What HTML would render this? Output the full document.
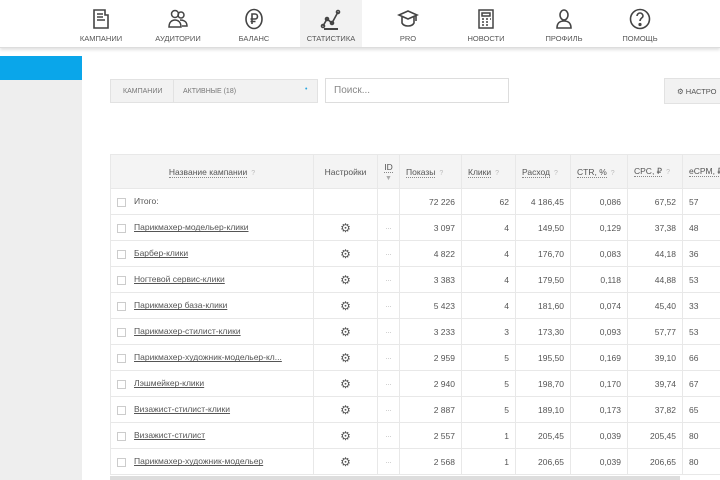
<!DOCTYPE html>
<html><head><meta charset="utf-8"><style>
*{margin:0;padding:0;box-sizing:border-box}
body{width:720px;height:480px;overflow:hidden;background:#fff;font-family:"Liberation Sans",sans-serif;color:#555;position:relative}
.nav{position:absolute;left:0;top:0;width:720px;height:48px;background:#fff;border-bottom:1px solid #ddd;box-shadow:0 2px 3px rgba(0,0,0,.12)}
.it{position:absolute;top:0;height:47px;text-align:center;font-size:7.5px;color:#555}
.it svg{position:absolute;top:8px;left:50%;margin-left:-11px}
.it span{position:absolute;bottom:4px;left:0;right:0}
.side{position:absolute;left:0;top:56px;width:82px;height:424px;background:#eee}
.blue{position:absolute;left:0;top:56px;width:82px;height:24px;background:#0aa6ea}
.fbox{position:absolute;left:110px;top:79px;width:208px;height:24px;background:#f2f2f2;border:1px solid #e2e2e2;font-size:7px;color:#777}
.search{position:absolute;left:325px;top:78px;width:184px;height:25px;border:1px solid #ddd;font-size:10px;color:#888;padding:6px 8px}
.btn{position:absolute;left:664px;top:78px;width:60px;height:26px;background:#f2f2f2;border:1px solid #e2e2e2;font-size:7.5px;color:#555;padding:8px 0 0 12px}
table{position:absolute;left:110px;top:154px;width:630px;border-collapse:collapse;font-size:8.5px;color:#555;table-layout:fixed}
td,th{border:1px solid #e8e8e8;height:26px;padding:0 6px;white-space:nowrap;overflow:hidden}
th{background:#f4f4f4;font-weight:normal;height:34px;color:#555}
th u{text-decoration:none;border-bottom:1px dotted #888}
th i{font-style:normal;color:#bbb;font-size:7px;margin-left:4px}
td.n{text-align:right}
td.nm a{color:#555;text-decoration:underline}
.cb{display:inline-block;width:9px;height:9px;border:1px solid #ccc;vertical-align:middle;margin-right:8px;background:#fff}
.g{text-align:center;font-size:12px;color:#555}
.d{text-align:center;color:#aaa;font-size:7px}
</style></head><body>
<div class="nav">
<div class="it" style="left:70px;width:62px;background:#fff"><svg width="22" height="22" viewBox="0 0 22 22" fill="none" stroke="#444" stroke-width="1.6"><path d="M4 2h11v5h3v13H4z M7 6h6M7 9h6M7 12h8"/></svg><span>КАМПАНИИ</span></div>
<div class="it" style="left:146px;width:64px"><svg width="22" height="22" viewBox="0 0 22 22" fill="none" stroke="#444" stroke-width="1.5"><circle cx="8" cy="6" r="3.5"/><circle cx="14" cy="7" r="3"/><path d="M2 19c0-5 3-7 6-7s6 2 6 7zM13 12c3 0 7 1 7 6h-5"/></svg><span>АУДИТОРИИ</span></div>
<div class="it" style="left:222px;width:64px"><svg width="22" height="22" viewBox="0 0 22 22" fill="none" stroke="#444" stroke-width="1.6"><ellipse cx="11" cy="11" rx="8" ry="9.5"/><path d="M9 16V6h3a2.5 2.5 0 010 5H7.5M7.5 13.5h5"/></svg><span>БАЛАНС</span></div>
<div class="it" style="left:300px;width:62px;background:#f2f2f2"><svg width="22" height="22" viewBox="0 0 22 22" fill="none" stroke="#444" stroke-width="1.6"><path d="M3 18l4-7 5 4 6-11"/><circle cx="3" cy="18" r="1.5"/><circle cx="7" cy="11" r="1.5"/><circle cx="12" cy="15" r="1.5"/><circle cx="18" cy="4" r="1.5"/><path d="M4 21h14" stroke-width="2"/></svg><span>СТАТИСТИКА</span></div>
<div class="it" style="left:376px;width:64px"><svg width="22" height="22" viewBox="0 0 22 22" fill="none" stroke="#444" stroke-width="1.6"><path d="M2 7l9-4 9 4-9 4z M5 9v6c2 4 10 4 12 0V9M19 7v6"/></svg><span>PRO</span></div>
<div class="it" style="left:454px;width:64px"><svg width="22" height="22" viewBox="0 0 22 22" fill="none" stroke="#444" stroke-width="1.5"><rect x="4" y="2" width="14" height="18"/><path d="M7 5h8v3H7zM7 11h2M11 11h2M15 11h1M7 14h2M11 14h2M7 17h2M11 17h2"/></svg><span>НОВОСТИ</span></div>
<div class="it" style="left:532px;width:64px"><svg width="22" height="22" viewBox="0 0 22 22" fill="none" stroke="#444" stroke-width="1.6"><ellipse cx="11" cy="7" rx="4" ry="5"/><path d="M4 20c0-5 3-7 7-7s7 2 7 7z"/></svg><span>ПРОФИЛЬ</span></div>
<div class="it" style="left:608px;width:64px"><svg width="22" height="22" viewBox="0 0 22 22" fill="none" stroke="#444" stroke-width="1.6"><circle cx="11" cy="11" r="9.5"/><path d="M8 8a3 3 0 116 0c0 2-3 2-3 5"/><circle cx="11" cy="16.5" r=".8" fill="#444"/></svg><span>ПОМОЩЬ</span></div>
</div>
<div class="side"></div><div class="blue"></div>
<div class="fbox"><span style="position:absolute;left:12px;top:8px">КАМПАНИИ</span><span style="position:absolute;left:62px;top:0;height:22px;border-left:1px solid #e2e2e2"></span><span style="position:absolute;left:72px;top:8px">АКТИВНЫЕ (18)</span><span style="position:absolute;left:194px;top:6px;color:#29a6e0">•</span></div>
<div class="search">Поиск...</div>
<div class="btn">⚙ НАСТРО</div>
<table>
<colgroup><col style="width:203px"><col style="width:64px"><col style="width:22px"><col style="width:62px"><col style="width:54px"><col style="width:55px"><col style="width:57px"><col style="width:55px"><col style="width:58px"></colgroup>
<tr><th><u>Название кампании</u><i>?</i></th><th>Настройки</th><th style="padding:0;text-align:center"><u>ID</u><br><span style="color:#aaa;font-size:7px">▼</span></th><th style="text-align:left"><u>Показы</u><i>?</i></th><th style="text-align:left"><u>Клики</u><i>?</i></th><th style="text-align:left"><u>Расход</u><i>?</i></th><th style="text-align:left"><u>CTR, %</u><i>?</i></th><th style="text-align:left"><u>CPC, ₽</u><i>?</i></th><th style="text-align:left"><u>eCPM, ₽</u></th></tr>
<tr><td class="nm"><span class="cb"></span>Итого:</td><td></td><td></td><td class="n">72 226</td><td class="n">62</td><td class="n">4 186,45</td><td class="n">0,086</td><td class="n">67,52</td><td style="text-align:left">57</td></tr>
<tr><td class="nm"><span class="cb"></span><a>Парикмахер-модельер-клики</a></td><td class="g">⚙</td><td class="d">...</td><td class="n">3 097</td><td class="n">4</td><td class="n">149,50</td><td class="n">0,129</td><td class="n">37,38</td><td style="text-align:left">48</td></tr>
<tr><td class="nm"><span class="cb"></span><a>Барбер-клики</a></td><td class="g">⚙</td><td class="d">...</td><td class="n">4 822</td><td class="n">4</td><td class="n">176,70</td><td class="n">0,083</td><td class="n">44,18</td><td style="text-align:left">36</td></tr>
<tr><td class="nm"><span class="cb"></span><a>Ногтевой сервис-клики</a></td><td class="g">⚙</td><td class="d">...</td><td class="n">3 383</td><td class="n">4</td><td class="n">179,50</td><td class="n">0,118</td><td class="n">44,88</td><td style="text-align:left">53</td></tr>
<tr><td class="nm"><span class="cb"></span><a>Парикмахер база-клики</a></td><td class="g">⚙</td><td class="d">...</td><td class="n">5 423</td><td class="n">4</td><td class="n">181,60</td><td class="n">0,074</td><td class="n">45,40</td><td style="text-align:left">33</td></tr>
<tr><td class="nm"><span class="cb"></span><a>Парикмахер-стилист-клики</a></td><td class="g">⚙</td><td class="d">...</td><td class="n">3 233</td><td class="n">3</td><td class="n">173,30</td><td class="n">0,093</td><td class="n">57,77</td><td style="text-align:left">53</td></tr>
<tr><td class="nm"><span class="cb"></span><a>Парикмахер-художник-модельер-кл...</a></td><td class="g">⚙</td><td class="d">...</td><td class="n">2 959</td><td class="n">5</td><td class="n">195,50</td><td class="n">0,169</td><td class="n">39,10</td><td style="text-align:left">66</td></tr>
<tr><td class="nm"><span class="cb"></span><a>Лэшмейкер-клики</a></td><td class="g">⚙</td><td class="d">...</td><td class="n">2 940</td><td class="n">5</td><td class="n">198,70</td><td class="n">0,170</td><td class="n">39,74</td><td style="text-align:left">67</td></tr>
<tr><td class="nm"><span class="cb"></span><a>Визажист-стилист-клики</a></td><td class="g">⚙</td><td class="d">...</td><td class="n">2 887</td><td class="n">5</td><td class="n">189,10</td><td class="n">0,173</td><td class="n">37,82</td><td style="text-align:left">65</td></tr>
<tr><td class="nm"><span class="cb"></span><a>Визажист-стилист</a></td><td class="g">⚙</td><td class="d">...</td><td class="n">2 557</td><td class="n">1</td><td class="n">205,45</td><td class="n">0,039</td><td class="n">205,45</td><td style="text-align:left">80</td></tr>
<tr><td class="nm"><span class="cb"></span><a>Парикмахер-художник-модельер</a></td><td class="g">⚙</td><td class="d">...</td><td class="n">2 568</td><td class="n">1</td><td class="n">206,65</td><td class="n">0,039</td><td class="n">206,65</td><td style="text-align:left">80</td></tr>
</table>
<div style="position:absolute;left:110px;top:476px;width:570px;height:4px;background:#ddd"></div>
</body></html>
